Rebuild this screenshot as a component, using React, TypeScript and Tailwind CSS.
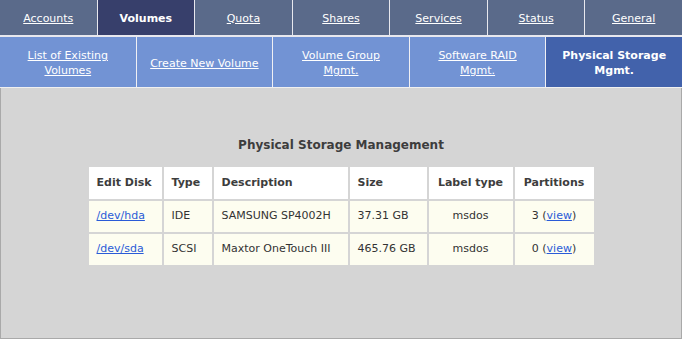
import React from 'react';

const tabs = ['Accounts', 'Volumes', 'Quota', 'Shares', 'Services', 'Status', 'General'];
const subTabs = [
  'List of Existing Volumes',
  'Create New Volume',
  'Volume Group Mgmt.',
  'Software RAID Mgmt.',
  'Physical Storage Mgmt.',
];

const disks = [
  { dev: '/dev/hda', type: 'IDE', desc: 'SAMSUNG SP4002H', size: '37.31 GB', label: 'msdos', parts: 3 },
  { dev: '/dev/sda', type: 'SCSI', desc: 'Maxtor OneTouch III', size: '465.76 GB', label: 'msdos', parts: 0 },
];

export default function App() {
  return (
    <div className="w-[682px] h-[339px] flex flex-col bg-[#e6e6e6] text-[11px] text-[#333]" style={{ fontFamily: '"DejaVu Sans", Verdana, sans-serif' }}>
      {/* top tabs */}
      <div className="grid grid-cols-7 gap-x-px h-[35px] bg-[#e8e8ee]">
        {tabs.map((t) => {
          const active = t === 'Volumes';
          return (
            <div
              key={t}
              className={`flex items-center justify-center pt-[3px] text-white ${active ? 'bg-[#373f6b] font-bold' : 'bg-[#5a6a8a] underline'}`}
            >
              {t}
            </div>
          );
        })}
      </div>
      <div className="h-[2px] bg-[#e8e8ee]" />
      {/* sub tabs */}
      <div className="grid grid-cols-5 gap-x-px h-[50px] bg-[#f0f0f4]">
        {subTabs.map((t) => {
          const active = t.startsWith('Physical');
          return (
            <div
              key={t}
              className={`flex items-center justify-center text-center leading-[15px] text-white px-3 pt-[2px] ${active ? 'bg-[#4262ab] font-bold' : 'bg-[#7293d4] underline'}`}
            >
              {t}
            </div>
          );
        })}
      </div>
      <div className="h-px bg-[#f0f0f0]" />
      {/* content */}
      <div className="flex-1 bg-[#d5d5d5] border border-t-0 border-[#a9a9a9] flex flex-col items-center pt-[48px]">
        <div className="font-bold text-[12px] text-[#3d3d3d] mb-[11px]">Physical Storage Management</div>
        <table className="border-separate border-spacing-[2px]">
          <thead>
            <tr className="bg-white h-[32px] font-bold text-[#3d3d3d]">
              <th className="text-left px-2 py-0 w-[73px]">Edit Disk</th>
              <th className="text-left px-2 py-0 w-[48px]">Type</th>
              <th className="text-left px-2 py-0 w-[134px]">Description</th>
              <th className="text-left px-2 py-0 w-[77px]">Size</th>
              <th className="text-center px-2 py-0 w-[84px]">Label type</th>
              <th className="text-center px-2 py-0 w-[79px]">Partitions</th>
            </tr>
          </thead>
          <tbody>
            {disks.map((d) => (
              <tr key={d.dev} className="bg-[#fdfdf0] h-[31px]">
                <td className="px-2 py-0">
                  <a href="#" className="text-[#2a5bd7] underline">{d.dev}</a>
                </td>
                <td className="px-2 py-0">{d.type}</td>
                <td className="px-2 py-0">{d.desc}</td>
                <td className="px-2 py-0">{d.size}</td>
                <td className="px-2 py-0 text-center">{d.label}</td>
                <td className="px-2 py-0 text-center">
                  {d.parts} (<a href="#" className="text-[#2a5bd7] underline">view</a>)
                </td>
              </tr>
            ))}
          </tbody>
        </table>
      </div>
    </div>
  );
}
